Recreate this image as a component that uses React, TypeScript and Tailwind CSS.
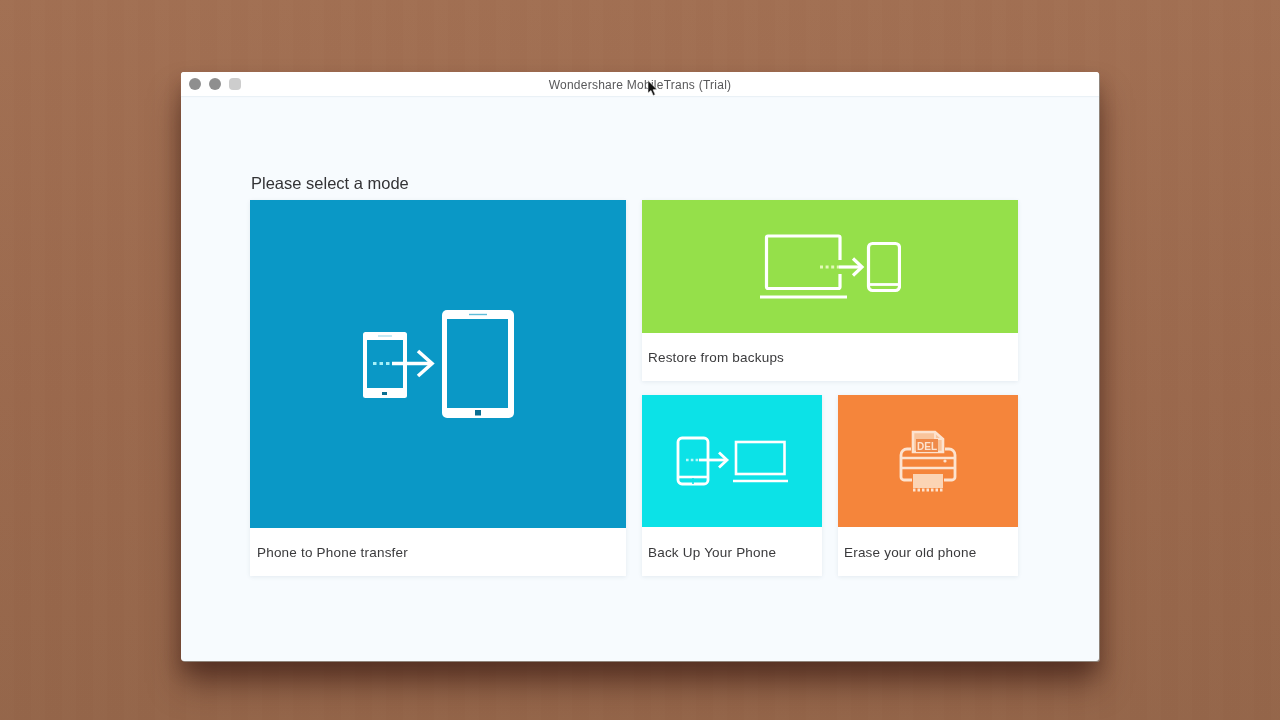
import React from "react";

function Cursor() {
  return (
    <svg className="absolute left-[466px] top-[8px]" width="12" height="17" viewBox="0 0 12 17">
      <path d="M1 0.5 L1 13 L4 10.5 L6.2 15.5 L8.2 14.6 L6 9.8 L10 9.5 Z" fill="#111" stroke="#eee" strokeWidth="0.6" />
    </svg>
  );
}

function PhoneToPhone() {
  return (
    <svg viewBox="0 0 152 110" className="w-[152px] h-[110px] blur-[0.6px]" fill="none" stroke="#fff">
      <rect x="1" y="23" width="44" height="66" rx="2.5" fill="#fff" stroke="none" />
      <rect x="5" y="31" width="36" height="48" fill="#0a98c6" stroke="none" />
      <path d="M16 27H30" stroke="#8fd3e8" strokeWidth="1" />
      <rect x="20" y="83" width="5" height="3" fill="#0a6f92" stroke="none" />
      <rect x="80" y="1" width="72" height="108" rx="5" fill="#fff" stroke="none" />
      <rect x="85" y="10" width="61" height="89" fill="#0a98c6" stroke="none" />
      <path d="M107 5.5H125" stroke="#5fbcd9" strokeWidth="1.4" />
      <rect x="113" y="101" width="6" height="5.5" fill="#0a6f92" stroke="none" />
      <path d="M11 54.5H30" stroke="#a5f0f8" strokeWidth="3" strokeDasharray="3.5 3" />
      <path d="M30 54.5H69" strokeWidth="3.6" />
      <path d="M56 42L70 54.5L56 67" strokeWidth="3.6" />
    </svg>
  );
}

function LaptopToTablet() {
  return (
    <svg className="w-[142px] h-[66px] blur-[0.6px]" viewBox="0 0 142 66" fill="none" stroke="#fff">
      <path d="M81 26V3.5a1.5 1.5 0 0 0-1.5-1.5H9a1.5 1.5 0 0 0-1.5 1.5V53a1.5 1.5 0 0 0 1.5 1.5H79.5a1.5 1.5 0 0 0 1.5-1.5V40" strokeWidth="3.2" />
      <path d="M1 63H88" strokeWidth="3" />
      <rect x="109.5" y="9.5" width="31" height="47" rx="4" strokeWidth="3.2" />
      <path d="M109.5 50.5H140.5" strokeWidth="2.8" />
      <path d="M61 33H80" stroke="#e3f9b8" strokeWidth="2.8" strokeDasharray="3 2.6" />
      <path d="M80 33H102" strokeWidth="3.2" />
      <path d="M94 24.5L103 33L94 41.5" strokeWidth="3.2" />
    </svg>
  );
}

function PhoneToLaptop() {
  return (
    <svg className="w-[112px] h-[50px] blur-[0.6px]" viewBox="0 0 112 50" fill="none" stroke="#fff">
      <rect x="2" y="2" width="30" height="46" rx="4" strokeWidth="2.8" />
      <path d="M2 41H32" strokeWidth="2.6" />
      <path d="M17 42V48" stroke="#0ce2e7" strokeWidth="1.6" />
      <path d="M10 24H23" stroke="#b5f8fa" strokeWidth="2.6" strokeDasharray="2.6 2.2" />
      <path d="M23 24H50" strokeWidth="2.8" />
      <path d="M43 16.5L51 24L43 31.5" strokeWidth="2.8" />
      <rect x="60" y="6" width="48.5" height="32" strokeWidth="2.6" />
      <path d="M57 45H112" strokeWidth="2.4" />
    </svg>
  );
}

function Shredder() {
  return (
    <svg className="w-[58px] h-[62px] blur-[0.6px]" viewBox="0 0 58 62" fill="none" stroke="#fde3cf">
      <path d="M14 22V2H36L44 9V22Z" fill="#f9c49b" strokeWidth="2.6" />
      <path d="M36 2V9H44" strokeWidth="1.8" />
      <rect x="17" y="9" width="22" height="13" fill="#ef8a4a" stroke="none" />
      <text x="28" y="19.5" textAnchor="middle" fontSize="10" fontWeight="700" fill="#fde3cf" stroke="none" fontFamily="'Liberation Sans', sans-serif">DEL</text>
      <path d="M12 19H8a6 6 0 0 0-6 6V47a3 3 0 0 0 3 3H13M46 19H50a6 6 0 0 1 6 6V47a3 3 0 0 1-3 3H45" strokeWidth="2.8" />
      <path d="M3 28H55M3 38H55" strokeWidth="2.6" />
      <rect x="14" y="44" width="30" height="14" fill="#fbd4b4" stroke="none" />
      <path d="M14 60H44" stroke="#fde3cf" strokeWidth="3" strokeDasharray="2.5 2" />
      <circle cx="46" cy="31" r="1.6" fill="#fde3cf" stroke="none" />
    </svg>
  );
}

function Card({ color, label, className, imgClass, textClass, children }: { color: string; label: string; className: string; imgClass: string; textClass: string; children: React.ReactNode }) {
  return (
    <div className={`flex flex-col bg-white shadow-[0_1px_4px_rgba(60,90,120,0.10)] ${className}`}>
      <div className={`flex items-center justify-center shrink-0 ${color} ${imgClass}`}>{children}</div>
      <div className={`flex-1 flex items-center text-[13.5px] tracking-[0.2px] text-[#3a3a3c] blur-[0.4px] ${textClass}`}>{label}</div>
    </div>
  );
}

export default function App() {
  return (
    <div
      className="w-full h-screen overflow-hidden pl-[181px] pt-[72px] bg-[repeating-linear-gradient(90deg,rgba(255,255,255,0.004)_0px,rgba(255,255,255,0.004)_14px,rgba(0,0,0,0.007)_14px,rgba(0,0,0,0.007)_31px),linear-gradient(180deg,#a27053_0%,#9b694d_55%,#95664a_100%)]"
      style={{ fontFamily: "'Liberation Sans', Arial, sans-serif" }}
    >
      <div className="relative w-[918px] h-[589px] rounded-[3px] bg-[#f7fbfe] shadow-[1px_1px_0_#8f8379,0_24px_32px_-2px_rgba(60,28,20,0.62),0_10px_16px_rgba(60,30,20,0.28)]">
        <div className="relative h-6 flex items-center justify-center bg-white rounded-t-[3px] shadow-[0_1px_1px_rgba(210,220,230,0.35)]">
          <div className="absolute left-2 top-[6px] flex gap-2 blur-[0.4px]">
            <span className="w-3 h-3 rounded-full bg-[#8f8f8f]" />
            <span className="w-3 h-3 rounded-full bg-[#8f8f8f]" />
            <span className="w-3 h-3 rounded-[4px] bg-[#cdcdcd]" />
          </div>
          <span className="pt-[2px] text-[12px] text-[#58585a] tracking-[0.25px] blur-[0.5px]">Wondershare MobileTrans (Trial)</span>
          <Cursor />
        </div>
        <div className="pl-[69px] pt-[77px]">
          <div className="h-[27px] pl-px text-[16.5px] leading-5 text-[#333336] blur-[0.4px]">Please select a mode</div>
          <div className="flex gap-4 items-start">
            <Card color="bg-[#0a98c6]" label="Phone to Phone transfer" className="w-[376px] h-[376px]" imgClass="h-[328px]" textClass="pl-[7px] pt-[2px]">
              <PhoneToPhone />
            </Card>
            <div className="flex flex-col gap-[14px] w-[376px]">
              <Card color="bg-[#95e04a]" label="Restore from backups" className="w-[376px] h-[181px]" imgClass="h-[133px]" textClass="pl-[6px] pt-[3px]">
                <LaptopToTablet />
              </Card>
              <div className="flex gap-4">
                <Card color="bg-[#0ce2e7]" label="Back Up Your Phone" className="w-[180px] h-[181px]" imgClass="h-[132px]" textClass="pl-[6px] pt-[3px]">
                  <PhoneToLaptop />
                </Card>
                <Card color="bg-[#f5853b]" label="Erase your old phone" className="w-[180px] h-[181px]" imgClass="h-[132px]" textClass="pl-[6px] pt-[3px]">
                  <Shredder />
                </Card>
              </div>
            </div>
          </div>
        </div>
      </div>
    </div>
  );
}
